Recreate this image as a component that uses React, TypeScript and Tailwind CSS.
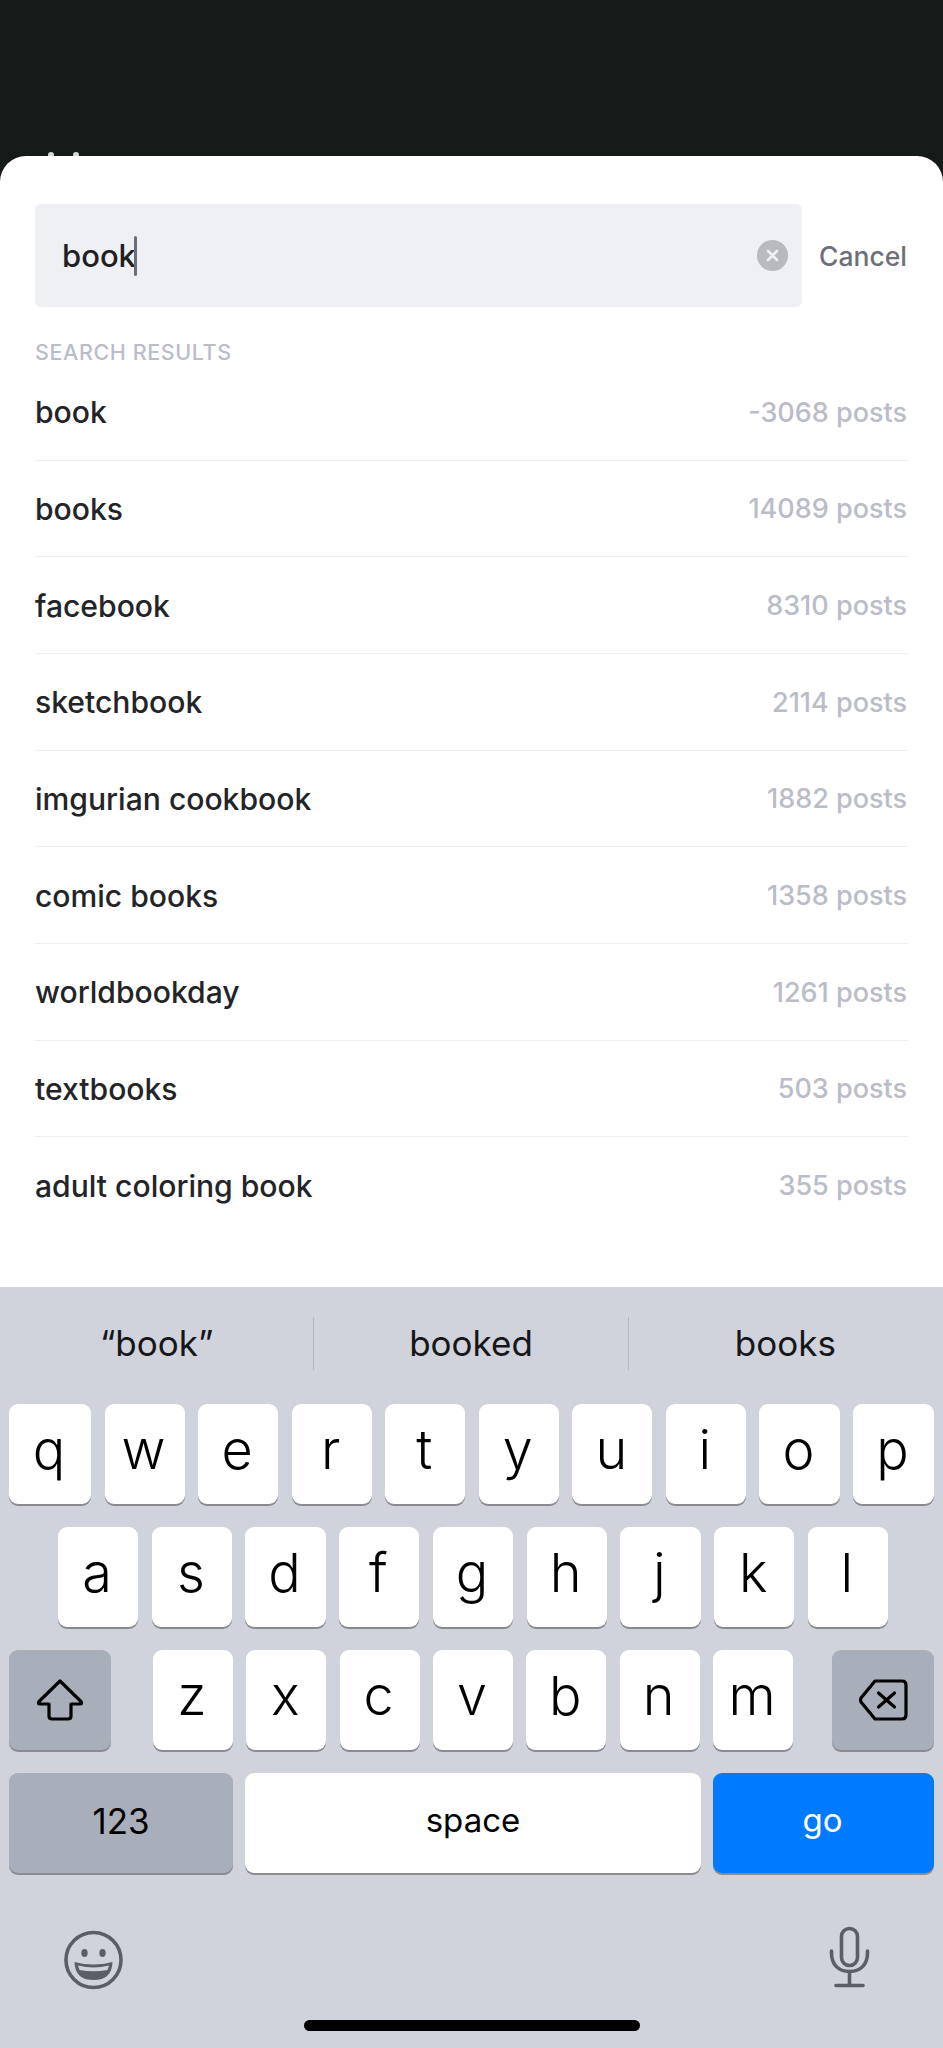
const results = [
  { tag: "book", posts: "-3068 posts" },
  { tag: "books", posts: "14089 posts" },
  { tag: "facebook", posts: "8310 posts" },
  { tag: "sketchbook", posts: "2114 posts" },
  { tag: "imgurian cookbook", posts: "1882 posts" },
  { tag: "comic books", posts: "1358 posts" },
  { tag: "worldbookday", posts: "1261 posts" },
  { tag: "textbooks", posts: "503 posts" },
  { tag: "adult coloring book", posts: "355 posts" },
]

const rowOne = ["w", "e", "r", "t", "y", "u", "i", "o"]
const rowTwo = ["a", "s", "d", "f", "g", "h", "j", "k", "l"]
const rowThree = ["z", "x", "c", "v", "b", "n", "m"]

const keyStyle =
  "flex h-[100px] items-center justify-center rounded-[9px] bg-white shadow-[0_2px_0_#8a8b90] text-black"

const Key = ({ label }: { label: string }) => (
  <div className={`${keyStyle} flex-1 pb-[9px] pr-[2px] text-[54px] font-light`}>{label}</div>
)

const App = () => {
  return (
    <div className="flex h-[2048px] w-[943px] flex-col overflow-hidden bg-[#151a18] font-['Inter',sans-serif]">
      <div className="relative h-[156px] shrink-0">
        <span className="absolute left-[48px] top-[152px] size-[6px] rounded-full bg-[#d8d8d8]" />
        <span className="absolute left-[73px] top-[152px] size-[6px] rounded-full bg-[#d8d8d8]" />
      </div>

      {/* search sheet */}
      <div className="relative flex h-[1131px] shrink-0 flex-col rounded-t-[26px] bg-white px-[35px] pt-[48px]">
        <div className="flex items-center justify-between">
          <div className="flex h-[103px] w-[767px] items-center justify-between rounded-[6px] bg-[#eff0f4] pl-[27px] pr-[14px]">
            <div className="flex items-center pt-[2px] text-[31px] font-medium text-[#1f2022]">
              book
              <span className="-ml-[2px] -mt-[2px] h-[40px] w-[3px] rounded-full bg-[#6a6d77]" />
            </div>
            <div className="flex size-[31px] items-center justify-center rounded-full bg-[#b8babf]">
              <svg width="15" height="15" viewBox="0 0 15 15" fill="none" stroke="#eff0f4" strokeWidth="2.6" strokeLinecap="round">
                <path d="M3 3l9 9M12 3l-9 9" />
              </svg>
            </div>
          </div>
          <span className="mr-[1px] pt-[2px] text-[26.5px] font-medium text-[#6c6f79]">Cancel</span>
        </div>

        <div className="mt-[33px] flex h-[25px] items-center text-[21.5px] font-medium tracking-[0.6px] text-[#babcc8]">SEARCH RESULTS</div>

        <div className="-mt-[1px] flex flex-col">
          {results.map((r, i) => (
            <div
              key={r.tag}
              className={`flex h-[96.67px] items-center justify-between pt-[2px] ${i < results.length - 1 ? "border-b border-[#eceef2]" : ""}`}
            >
              <span className="text-[30.1px] font-medium text-[#232427]">{r.tag}</span>
              <span className="mr-[1px] text-[27px] font-medium text-[#babcc8]">{r.posts}</span>
            </div>
          ))}
        </div>
      </div>

      {/* keyboard */}
      <div className="flex flex-1 flex-col bg-[#d0d3db] text-black">
        <div className="mb-[34px] mt-[30px] flex h-[53px] items-center pr-[1px] text-[35px] text-[#15161a]">
          <div className="flex flex-1 justify-center">“book”</div>
          <div className="h-full w-px bg-[#b4b7be]" />
          <div className="flex flex-1 justify-center">booked</div>
          <div className="h-full w-px bg-[#b4b7be]" />
          <div className="flex flex-1 justify-center">books</div>
        </div>

        <div className="flex flex-col gap-[23px] px-[9px]">
          <div className="flex gap-[13.5px]">
            <div className="flex w-[82px]">
              <Key label="q" />
            </div>
            {rowOne.map((k) => (
              <Key key={k} label={k} />
            ))}
            <div className="flex w-[81px]">
              <Key label="p" />
            </div>
          </div>
          <div className="flex gap-[13.5px] pl-[49px] pr-[46px]">
            {rowTwo.map((k) => (
              <Key key={k} label={k} />
            ))}
          </div>
          <div className="flex items-center">
            <div className={`${keyStyle} w-[102px] !bg-[#a9afba]`}>
              <svg width="48" height="42" viewBox="0 0 48 42" fill="none" stroke="#000" strokeWidth="3.2" strokeLinejoin="round">
                <path d="M24 2 L45 22.5 Q46.5 25 44 25 H35 V37 Q35 40 32 40 H16 Q13 40 13 37 V25 H4 Q1.5 25 3 22.5 Z" />
              </svg>
            </div>
            <div className="ml-[42px] flex w-[640px] gap-[13.5px]">
              {rowThree.map((k) => (
                <Key key={k} label={k} />
              ))}
            </div>
            <div className={`${keyStyle} ml-auto w-[102px] !bg-[#a9afba]`}>
              <svg width="50" height="42" viewBox="0 0 50 42" fill="none" stroke="#000" strokeWidth="3.2" strokeLinejoin="round" strokeLinecap="round">
                <path d="M17 2 H44 Q48 2 48 6 V36 Q48 40 44 40 H17 L3 23 Q2 21 3 19 Z" />
                <path d="M20.5 14 L36.5 28 M36.5 14 L20.5 28" />
              </svg>
            </div>
          </div>
          <div className="flex gap-[12px]">
            <div className={`${keyStyle} w-[224px] !bg-[#a9afba] pb-[3px] text-[35px]`}>123</div>
            <div className={`${keyStyle} flex-1 pb-[4px] text-[33px]`}>space</div>
            <div className={`${keyStyle} w-[221px] !bg-[#007aff] pb-[4px] pr-[2px] text-[33px] !text-white`}>go</div>
          </div>
        </div>

        <div className="mt-[53px] flex items-start justify-between pl-[64px] pr-[73px]">
          <svg className="mt-[4px]" width="60" height="60" viewBox="0 0 60 60">
            <circle cx="29.5" cy="30" r="27.5" fill="none" stroke="#5b5e68" strokeWidth="3.6" />
            <ellipse cx="20.5" cy="23" rx="3.2" ry="4" fill="#5b5e68" />
            <ellipse cx="38.5" cy="23" rx="3.2" ry="4" fill="#5b5e68" />
            <path d="M10.5 32 Q29.5 37 48.5 32 Q48 50 29.5 50 Q11 50 10.5 32 Z" fill="#5b5e68" />
            <path d="M14 35.5 Q29.5 39.5 45 35.5 L43.5 40 Q29.5 42.5 15.5 40 Z" fill="#d0d3db" />
          </svg>
          <svg width="41" height="62" viewBox="0 0 41 62" fill="none" stroke="#5b5e68" strokeWidth="3.6" strokeLinecap="round">
            <rect x="12.5" y="2.5" width="16" height="37" rx="8" />
            <path d="M2.5 25 V27 C2.5 38 9 45.5 20.5 45.5 C32 45.5 38.5 38 38.5 27 V25" />
            <path d="M20.5 45.5 V59" />
            <path d="M7 59.5 H34" />
          </svg>
        </div>

        <div className="mx-auto mt-[30px] h-[11px] w-[336px] rounded-full bg-black" />
      </div>
    </div>
  )
}

export default App
